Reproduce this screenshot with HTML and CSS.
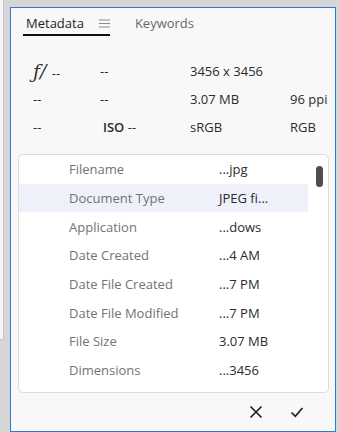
FILE: index.html
```html
<!DOCTYPE html>
<html lang="en">
<head>
    <meta charset="UTF-8">
    <meta name="viewport" content="width=device-width, initial-scale=1.0">
    <title>Metadata</title>
    <link rel="stylesheet" href="styles.css">
</head>
<body>
    <div class="side-strip"></div>
    <div class="panel">
        <div class="tabs">
            <div class="tab active">
                <span>Metadata</span>
                <svg class="menu-icon" width="11" height="9" viewBox="0 0 11 9">
                    <path d="M0 1h11M0 4.5h11M0 8h11" stroke="#8a8a8a" stroke-width="1.1" fill="none"/>
                </svg>
            </div>
            <div class="tab">Keywords</div>
        </div>

        <div class="info-grid">
            <span class="aperture"><i>ƒ/</i> --</span>
            <span>--</span>
            <span>3456 x 3456</span>
            <span></span>

            <span>--</span>
            <span>--</span>
            <span>3.07 MB</span>
            <span>96 ppi</span>

            <span>--</span>
            <span class="iso"><b>ISO</b> --</span>
            <span>sRGB</span>
            <span>RGB</span>
        </div>

        <div class="meta-box">
            <div class="meta-list">
                <div class="meta-row"><span class="label">Filename</span><span class="value">...jpg</span></div>
                <div class="meta-row selected"><span class="label">Document Type</span><span class="value">JPEG fi...</span></div>
                <div class="meta-row"><span class="label">Application</span><span class="value">...dows</span></div>
                <div class="meta-row"><span class="label">Date Created</span><span class="value">...4 AM</span></div>
                <div class="meta-row"><span class="label">Date File Created</span><span class="value">...7 PM</span></div>
                <div class="meta-row"><span class="label">Date File Modified</span><span class="value">...7 PM</span></div>
                <div class="meta-row"><span class="label">File Size</span><span class="value">3.07 MB</span></div>
                <div class="meta-row"><span class="label">Dimensions</span><span class="value">...3456</span></div>
            </div>
            <div class="scroll-track">
                <div class="scroll-thumb"></div>
            </div>
        </div>

        <div class="actions">
            <button class="icon-btn" title="Cancel">
                <svg width="14" height="14" viewBox="0 0 14 14">
                    <path d="M1.5 1.5l11 11M12.5 1.5l-11 11" stroke="#222" stroke-width="1.7" fill="none"/>
                </svg>
            </button>
            <button class="icon-btn" title="Apply">
                <svg width="14" height="12" viewBox="0 0 14 12">
                    <path d="M1.5 6.5l3.8 3.8L12.5 2" stroke="#222" stroke-width="1.7" fill="none"/>
                </svg>
            </button>
        </div>
    </div>
</body>
</html>
```

FILE: styles.css
```css
* {
    box-sizing: border-box;
}
body {
    margin: 0;
    width: 340px;
    height: 432px;
    overflow: hidden;
    background: #d6d6d6;
    display: flex;
    align-items: flex-start;
    font-family: "Open Sans", "Noto Sans", sans-serif;
    font-size: 13px;
    color: #2c2c2c;
}
.side-strip {
    width: 4px;
    height: 340px;
    background: #f4f4f4;
    border-right: 1px solid #c4c4c4;
    border-bottom: 1px solid #c4c4c4;
    border-bottom-right-radius: 2px;
}
.panel {
    margin-left: 6px;
    margin-top: 7px;
    width: 326px;
    height: 425px;
    background: #f8f8f8;
    border: 1px solid #2d7ad6;
    display: flex;
    flex-direction: column;
}
.tabs {
    display: flex;
    align-items: flex-end;
    gap: 22px;
    padding: 6px 0 0 12px;
    height: 28px;
}
.tab {
    display: flex;
    align-items: center;
    gap: 15px;
    height: 21px;
    padding: 0 0 5px 3px;
    color: #6a6a6a;
    line-height: 16px;
}
.tab.active {
    color: #1e1e1e;
    border-bottom: 2px solid #111;
    padding-bottom: 3px;
}
.menu-icon {
    margin-top: 1px;
}
.info-grid {
    display: grid;
    grid-template-columns: 67px 90px 100px 1fr;
    grid-auto-rows: 28px;
    align-items: center;
    padding: 21px 0 0 22px;
    color: #2c2c2c;
}
.aperture i {
    font-family: "DejaVu Serif", serif;
    font-size: 19px;
    font-style: italic;
    color: #333;
    margin-right: 2px;
}
.iso {
    margin-left: 3px;
}
.iso b {
    font-weight: 600;
}
.meta-box {
    margin: 13px 6px 0 7px;
    height: 239px;
    background: #fff;
    border: 1px solid #dcdcdc;
    border-radius: 5px;
    display: flex;
}
.meta-list {
    width: 289px;
}
.meta-row {
    display: flex;
    align-items: center;
    height: 28.7px;
}
.meta-row.selected {
    background: #eef0fa;
}
.label {
    width: 200px;
    padding-left: 50px;
    flex-shrink: 0;
    color: #737373;
}
.value {
    color: #2c2c2c;
}
.scroll-track {
    flex: 1;
    padding: 11px 0 0 8px;
}
.scroll-thumb {
    width: 7px;
    height: 21px;
    border-radius: 4px;
    background: #4e4e4e;
}
.actions {
    display: flex;
    justify-content: flex-end;
    align-items: center;
    gap: 27px;
    padding: 12px 31px 0 0;
}
.icon-btn {
    border: none;
    background: none;
    padding: 0;
    width: 14px;
    height: 14px;
    display: flex;
    align-items: center;
    justify-content: center;
}
```
